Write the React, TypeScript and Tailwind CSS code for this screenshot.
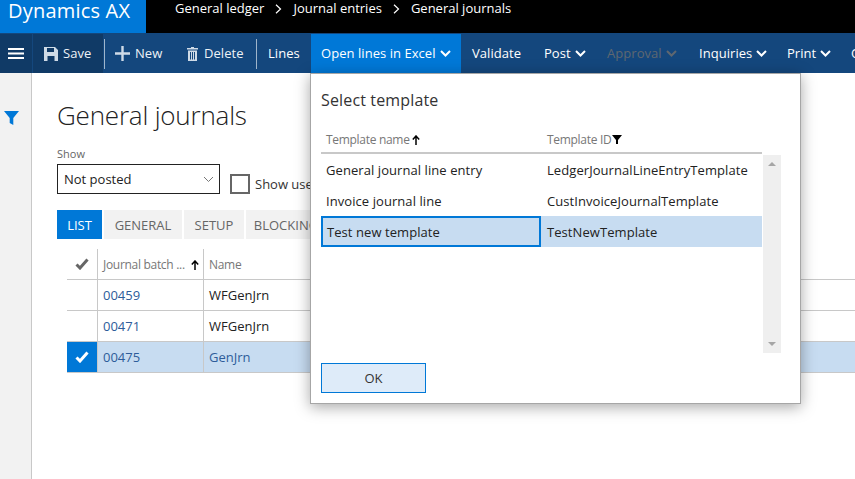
import React from "react";

const Chevron = ({ className = "" }: { className?: string }) => (
  <svg width="11" height="7" viewBox="0 0 11 7" className={`shrink-0 ${className}`} fill="none" stroke="currentColor" strokeWidth="2">
    <path d="M1 1l4.5 4.5L10 1" />
  </svg>
);

const Crumb = () => (
  <svg width="7" height="10" viewBox="0 0 7 10" className="shrink-0 mt-[4px]" fill="none" stroke="#fff" strokeWidth="1.2">
    <path d="M1 .8L5.5 5 1 9.2" />
  </svg>
);

const Check = ({ color }: { color: string }) => (
  <svg width="14" height="12" viewBox="0 0 14 12" fill="none" stroke={color} strokeWidth="3">
    <path d="M1.5 6.5l3.5 3.5L12.5 1.5" />
  </svg>
);

const UpArrow = () => (
  <svg width="8" height="10" viewBox="0 0 8 10" fill="none" stroke="#000" strokeWidth="1.5" className="shrink-0">
    <path d="M4 10V1.5M.8 4.5L4 1l3.2 3.5" />
  </svg>
);

const Cmd = ({ label, w, pl, dim, chev, active }: { label: string; w: string; pl: string; dim?: boolean; chev?: boolean; active?: boolean }) => (
  <div className={`flex items-center gap-[4px] h-full shrink-0 whitespace-nowrap ${w} ${pl} ${active ? "bg-[#0078d7]" : ""} ${dim ? "text-[#5f6770]" : "text-white"}`}>
    <span>{label}</span>
    {chev && <Chevron />}
  </div>
);

const Row = ({ id, name, selected }: { id: string; name: string; selected?: boolean }) => (
  <div className={`flex h-[31px] border-b border-[#c8c8c8] text-[13px] ${selected ? "bg-[#c7dcf1]" : ""}`}>
    <div className={`w-[30px] shrink-0 flex items-center justify-center ${selected ? "bg-[#0078d7]" : ""}`}>
      {selected && <Check color="#fff" />}
    </div>
    <div className="w-[106px] shrink-0 flex items-center pl-[5px] pt-[2px] border-l border-[#c8c8c8] text-[#2e5c9a]">{id}</div>
    <div className={`flex-1 flex items-center pl-[5px] pt-[2px] border-l border-[#c8c8c8] ${selected ? "text-[#2e5c9a]" : "text-[#222]"}`}>{name}</div>
  </div>
);

const Tab = ({ label, w, active }: { label: string; w: string; active?: boolean }) => (
  <div className={`h-[29px] ${w} shrink-0 flex items-center justify-center pt-[2px] text-[13px] ${active ? "bg-[#0078d7] text-white" : "bg-[#f2f2f2] text-[#666]"}`}>{label}</div>
);

const TRow = ({ a, b, selected }: { a: string; b: string; selected?: boolean }) => (
  <div className={`flex h-[31px] text-[13px] text-[#222] tracking-[0.07px] ${selected ? "bg-[#c7dcf1]" : ""}`}>
    <div className={`w-[220px] shrink-0 flex items-center pt-[3px] ${selected ? "border-2 border-[#0078d7] pl-[4px]" : "pl-[5px]"}`}>{a}</div>
    <div className="flex-1 flex items-center pt-[3px] pl-[6px]">{b}</div>
  </div>
);

export default function App() {
  return (
    <div className="relative w-[855px] h-[479px] overflow-hidden bg-white font-['Open_Sans','Noto_Sans',sans-serif]">
      {/* Top bar */}
      <div className="flex h-[33px] bg-black text-white">
        <div className="w-[146px] bg-[#0078d7] text-[20px] pl-[8px] leading-[22px] tracking-[0.2px]">Dynamics AX</div>
        <div className="flex items-start pl-[29px] text-[13px] leading-[17px] gap-[11px]">
          <span>General ledger</span>
          <Crumb />
          <span>Journal entries</span>
          <Crumb />
          <span>General journals</span>
        </div>
      </div>

      {/* Command bar */}
      <div className="flex h-[40px] bg-[#14477d] text-[13px] overflow-hidden items-stretch pt-px tracking-[0.05px]">
        <div className="w-[32px] shrink-0 bg-[#103a66] flex items-center justify-center">
          <svg width="16" height="11" viewBox="0 0 16 11" fill="#fff"><rect width="16" height="2" /><rect y="4.5" width="16" height="2" /><rect y="9" width="16" height="2" /></svg>
        </div>
        <div className="w-[70px] shrink-0 bg-[#103a66] ml-px flex items-center gap-[5px] pl-[11px] text-[#eef2f6]">
          <svg width="14" height="14" viewBox="0 0 14 14" fill="#cfdbe7"><path d="M0 0h11l3 3v11H0zM3 1v4h7V1zM3.5 9v5h7V9z" fillRule="evenodd" /></svg>
          <span>Save</span>
        </div>
        <div className="w-px h-[30px] self-center bg-[#9fb5cb] ml-[1px] shrink-0" />
        <div className="w-[75px] shrink-0 flex items-center gap-[5px] pl-[10px] text-[#eef2f6]">
          <svg width="15" height="15" viewBox="0 0 15 15" fill="#cfdbe7"><path d="M6.3 0h2.4v6.3H15v2.4H8.7V15H6.3V8.7H0V6.3h6.3z" /></svg>
          <span>New</span>
        </div>
        <div className="w-[76px] shrink-0 flex items-center gap-[6px] pl-[7px] text-[#eef2f6]">
          <svg width="11" height="14" viewBox="0 0 11 14" fill="#cfdbe7"><path d="M4 0h3v1h4v1.5H0V1h4zM1 3.5h9V14H1zM3 5v7.5h1V5zm2 0v7.5h1V5zm2 0v7.5h1V5z" fillRule="evenodd" /></svg>
          <span>Delete</span>
        </div>
        <div className="w-px h-[30px] self-center bg-[#9fb5cb] shrink-0" />
        <Cmd label="Lines" w="w-[54px]" pl="pl-[11px]" />
        <Cmd label="Open lines in Excel" w="w-[150px]" pl="pl-[10px]" chev active />
        <Cmd label="Validate" w="w-[72px]" pl="pl-[11px]" />
        <Cmd label="Post" w="w-[64px]" pl="pl-[11px]" chev />
        <Cmd label="Approval" w="w-[92px]" pl="pl-[10px]" chev dim />
        <Cmd label="Inquiries" w="w-[88px]" pl="pl-[10px]" chev />
        <Cmd label="Print" w="w-[74px]" pl="pl-[10px]" chev />
        <Cmd label="Options" w="w-[60px]" pl="pl-0" />
      </div>

      {/* Body */}
      <div className="flex h-[406px]">
        <div className="w-[32px] shrink-0 bg-[#f2f2f2] border-r border-[#c8c8c8] pt-[38px] pl-[4px]">
          <svg width="15" height="14" viewBox="0 0 15 14" fill="#0078d7"><path d="M0 0h15L9.3 7v7L5.7 12V7z" /></svg>
        </div>
        <div className="flex-1 pl-[25px] min-w-0">
          <div className="text-[26px] font-light leading-[34px] mt-[25px] text-[#222] tracking-[-0.2px]">General journals</div>
          <div className="text-[11px] leading-[14px] text-[#666] mt-[15px]">Show</div>
          <div className="flex items-end mt-[3px]">
            <div className="w-[163px] h-[30px] border border-[#222] flex items-center justify-between pl-[6px] pt-[1px] pr-[5px] text-[13px] text-[#222]">
              <span className="pt-[1px]">Not posted</span>
              <Chevron className="text-[#777] [&>path]:[stroke-width:1]" />
            </div>
            <div className="w-[20px] h-[20px] border-2 border-[#666] ml-[10px]" />
            <span className="text-[13px] text-[#333] ml-[5px] leading-[20px] whitespace-nowrap">Show user-created transactions only</span>
          </div>
          <div className="flex gap-[2px] mt-[16px]">
            <Tab label="LIST" w="w-[45px]" active />
            <Tab label="GENERAL" w="w-[78px]" />
            <Tab label="SETUP" w="w-[60px]" />
            <Tab label="BLOCKING" w="w-[80px]" />
          </div>
          <div className="mt-[10px] ml-[10px]">
            <div className="flex h-[31px] border-b border-[#c8c8c8] text-[12px] text-[#777] tracking-[-0.3px]">
              <div className="w-[30px] shrink-0 flex items-center justify-center"><Check color="#666" /></div>
              <div className="w-[106px] shrink-0 flex items-center pl-[5px] pt-[2px] pr-[4px] border-l border-[#c8c8c8] justify-between whitespace-nowrap">
                <span>Journal batch ...</span><UpArrow />
              </div>
              <div className="flex-1 flex items-center pl-[5px] pt-[2px] border-l border-[#c8c8c8]">Name</div>
            </div>
            <Row id="00459" name="WFGenJrn" />
            <Row id="00471" name="WFGenJrn" />
            <Row id="00475" name="GenJrn" selected />
          </div>
        </div>
      </div>

      {/* Dialog */}
      <div className="absolute left-[310px] top-[73px] w-[491px] h-[331px] bg-white border border-[#a6a6a6] shadow-[0_3px_14px_rgba(0,0,0,0.35)] pl-[10px] pt-[14px]">
        <div className="text-[16px] leading-[24px] text-[#333] tracking-[0.15px]">Select template</div>
        <div className="flex h-[30px] w-[441px] mt-[12px] pt-[3px] items-center text-[12px] text-[#777] border-b-2 border-[#c8c8c8] tracking-[-0.3px]">
          <div className="w-[221px] pl-[5px] flex items-center gap-[2px]"><span>Template name</span><UpArrow /></div>
          <div className="flex items-center gap-[1px] pl-[5px]"><span>Template ID</span>
            <svg width="10" height="9" viewBox="0 0 9 8" fill="#000"><path d="M0 0h9L5.4 4.5V8H3.6V4.5z" /></svg>
          </div>
        </div>
        <div className="flex h-[199px]">
          <div className="w-[441px] shrink-0">
            <TRow a="General journal line entry" b="LedgerJournalLineEntryTemplate" />
            <TRow a="Invoice journal line" b="CustInvoiceJournalTemplate" />
            <TRow a="Test new template" b="TestNewTemplate" selected />
          </div>
          <div className="w-[18px] mt-px ml-[1px] bg-[#efefef] flex flex-col items-center justify-between py-[7px]">
            <div className="w-0 h-0 border-l-[4px] border-r-[4px] border-b-[4px] border-l-transparent border-r-transparent border-b-[#a6a6a6]" />
            <div className="w-0 h-0 border-l-[4px] border-r-[4px] border-t-[4px] border-l-transparent border-r-transparent border-t-[#a6a6a6]" />
          </div>
        </div>
        <div className="w-[105px] h-[30px] mt-[10px] pt-[1px] bg-[#deebf9] border border-[#0078d7] flex items-center justify-center text-[13px] text-[#333]">OK</div>
      </div>
    </div>
  );
}
